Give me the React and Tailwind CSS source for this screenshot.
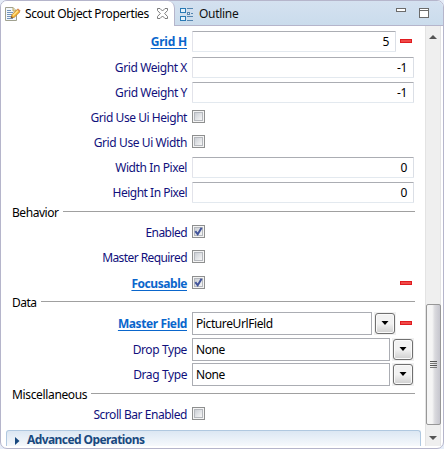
const FONT = "font-['Noto_Sans','Open_Sans',sans-serif]";

function Label({ text, link, spacing }) {
  return (
    <div className="flex w-[186px] shrink-0 justify-end whitespace-nowrap">
      <span
        className={`${spacing} ${
          link ? "font-bold text-[#0a66cc] underline decoration-1 underline-offset-2" : "text-[#10107c]"
        }`}
      >
        {text}
      </span>
    </div>
  );
}

function Row({ label, link, spacing = "tracking-[-0.4px]", height = "h-[25px]", children }) {
  return (
    <div className={`flex items-center ${height}`}>
      <Label text={label} link={link} spacing={spacing} />
      <div className="ml-[5px] flex items-center">{children}</div>
    </div>
  );
}

function NumberField({ value, width = "w-[222px]" }) {
  return (
    <div
      className={`${width} flex h-[21px] items-center justify-end rounded-[1px] border border-t-[#abadb3] border-r-[#dbdfe6] border-b-[#e3e9ef] border-l-[#e2e3ea] bg-white pr-[6px] text-black tracking-[-0.4px]`}
    >
      {value}
    </div>
  );
}

function Checkbox({ checked }) {
  return (
    <div className="mb-[2px] h-[13px] w-[13px] border border-[#8e8f8f] bg-[#f4f4f4] p-px">
      <div className="h-[9px] w-[9px] border border-[#b5b8bd] bg-linear-to-br from-[#cbcfd5] to-[#f6f6f6]">
        {checked && (
          <svg className="-mt-px -ml-px block" width="9" height="9" viewBox="0 0 9 9" fill="none">
            <path d="M1.3 4.2 L3.7 7.2 L7.6 .8" stroke="#42549a" strokeWidth="2" />
          </svg>
        )}
      </div>
    </div>
  );
}

function Minus({ gap = "ml-1" }) {
  return <div className={`${gap} mb-px h-1 w-3 border border-[#e01c20] bg-[#f04a48]`} />;
}

function Combo({ value, width = "w-[198px]", spacing = "tracking-[-0.4px]" }) {
  return (
    <>
      <div className={`${width} ${spacing} flex h-[23px] items-center border border-[#abadb3] bg-white pl-[3px] text-black`}>
        {value}
      </div>
      <div className="ml-[2px] flex h-[23px] w-[22px] items-center justify-center bg-[#f0f0f0]">
        <div className="flex h-[21px] w-5 items-center justify-center rounded-[3px] border border-[#707070] bg-linear-to-b from-[#f2f2f2] from-50% to-[#cfcfcf] pb-px shadow-[inset_0_0_0_1px_#fafafa]">
          <svg width="8" height="4" viewBox="0 0 8 4">
            <path d="M0.5 0H7.5L4 4Z" fill="#000" />
          </svg>
        </div>
      </div>
    </>
  );
}

function Section({ title, spacing, className = "" }) {
  return (
    <div className={`flex h-[15px] items-center pl-[11px] ${className}`}>
      <span className={`whitespace-nowrap text-black ${spacing}`}>{title}</span>
      <div className="mb-[2px] ml-[4px] h-px flex-1 bg-[#a0a0a0]" />
    </div>
  );
}

function TabBar() {
  return (
    <div className="flex h-[25px] shrink-0 bg-linear-to-b from-[#d4e1f0] to-[#cadcec]">
      <div className="flex h-[25px] w-[174px] shrink-0 items-center rounded-tr-[7px] border-r border-[#b5b5cb] bg-white pl-1">
        <svg width="16" height="16" viewBox="0 0 16 16" className="shrink-0">
          <path d="M.5 1.5H8L11.5 5V14.5H.5Z" fill="#f2f7fc" stroke="#a0a18f" />
          <path d="M8 1.5V5H11.5" fill="#e5dbad" stroke="#b6a96d" />
          <path d="M2 4.5H6M2 6.5H8M2 8.5H7M2 10.5H6M2 12.5H8" stroke="#7294ba" />
          <path d="M6 12L7 8.7L12.4 3.2L15 5.7L9.4 11.2Z" fill="#f4b735" stroke="#bd7925" strokeWidth=".8" />
          <path d="M8 9.5L13 4.5" stroke="#ffe38c" strokeWidth="1.2" />
          <path d="M12 3.5L13.1 2.4L15.6 4.8L14.5 6Z" fill="#d98a57" />
          <path d="M6 12L6.6 10L8 11.4Z" fill="#5a4630" />
        </svg>
        <span className="ml-[4px] w-[126px] whitespace-nowrap tracking-[-0.38px] text-black">
          Scout Object Properties
        </span>
        <svg width="11" height="11" viewBox="0 0 11 11" className="ml-[6px] shrink-0">
          <path
            d="M.5 .5H3L5.5 3L8 .5H10.5V2.5L7.7 5.5L10.5 8.5V10.5H8L5.5 8L3 10.5H.5V8.5L3.3 5.5L.5 2.5Z"
            fill="#fff"
            stroke="#6e6e6e"
            strokeWidth=".9"
          />
        </svg>
      </div>
      <div className="flex flex-1 items-center border-b border-[#b5b5cb] pl-[5px]">
        <svg width="14" height="16" viewBox="0 0 14 16" shapeRendering="crispEdges" className="mt-px shrink-0">
          <path d="M1 2H5V6H1ZM1 11H5V15H1Z" fill="#e4f1fa" />
          <path d="M.5 2.5H5.5V6.5H.5ZM.5 10.5H5.5V14.5H.5Z" fill="#e4f1fa" stroke="#2779b5" />
          <path d="M7 2.5H13M11 7.5H13M7 10.5H13M7 14.5H13" stroke="#5686b0" />
          <path d="M7.5 6.5H9.5V8.5H7.5Z" fill="#e4f1fa" stroke="#5686b0" />
        </svg>
        <span className="ml-[5px] tracking-[-0.3px] text-[#111]">Outline</span>
        <div className="mt-[7px] ml-auto h-1 w-[10px] self-start border border-[#6b6b6b] bg-white" />
        <div className="mt-[7px] mr-[14px] ml-[13px] h-[10px] w-[10px] self-start border border-[#6b6b6b] bg-white pt-px">
          <div className="h-px bg-[#6b6b6b]" />
        </div>
      </div>
    </div>
  );
}

function ScrollBar() {
  return (
    <div className="flex h-[420px] w-4 shrink-0 flex-col items-center border-x border-[#e3e3e3] bg-[#efefef]">
      <svg width="8" height="4" viewBox="0 0 8 4" className="mt-[9px] shrink-0">
        <path d="M0 4L4 0L8 4Z" fill="#555" />
      </svg>
      <div className="mt-[265px] flex h-[121px] w-[15px] shrink-0 flex-col items-center justify-center gap-px rounded-[2px] border border-[#979797] bg-linear-to-r from-[#f5f5f5] from-40% via-[#dadade] via-60% to-[#c6c6ce]">
        <div className="h-px w-[7px] bg-[#555]" />
        <div className="h-px w-[7px] bg-[#777]" />
        <div className="h-px w-[7px] bg-[#555]" />
        <div className="h-px w-[7px] bg-[#777]" />
      </div>
      <svg width="8" height="4" viewBox="0 0 8 4" className="mt-[11px] shrink-0">
        <path d="M0 0L4 4L8 0Z" fill="#555" />
      </svg>
    </div>
  );
}

export default function App() {
  return (
    <div className={`h-[449px] w-[444px] overflow-hidden bg-[#e6edf8] text-[12px] leading-[15px] ${FONT}`}>
      <div className="flex h-[449px] w-[444px] flex-col overflow-hidden rounded-[7px] border border-[#b5b5cb] bg-white">
        <TabBar />
        <div className="flex h-[420px] shrink-0 overflow-hidden">
          <div className="flex w-[424px] shrink-0 flex-col">
            <div className="flex w-[414px] flex-col pt-[3px]">
              <Row label="Grid H" link spacing="tracking-[-0.2px]" height="h-[26px] pb-px">
                <NumberField value="5" width="w-[204px]" />
                <Minus />
              </Row>
              <Row label="Grid Weight X"><NumberField value="-1" /></Row>
              <Row label="Grid Weight Y"><NumberField value="-1" /></Row>
              <Row label="Grid Use Ui Height" spacing="tracking-[-0.45px]"><Checkbox /></Row>
              <Row label="Grid Use Ui Width"><Checkbox /></Row>
              <Row label="Width In Pixel"><NumberField value="0" /></Row>
              <Row label="Height In Pixel" spacing="tracking-[-0.5px]"><NumberField value="0" /></Row>
              <Section title="Behavior" spacing="tracking-[-0.45px]" />
              <Row label="Enabled" spacing="tracking-[-0.55px]"><Checkbox checked /></Row>
              <Row label="Master Required" spacing="tracking-[-0.58px]"><Checkbox /></Row>
              <Row label="Focusable" link spacing="tracking-[-0.45px]" height="h-[26px] pt-px">
                <Checkbox checked />
                <Minus gap="ml-[195px]" />
              </Row>
              <Section title="Data" spacing="tracking-[-0.5px]" className="-mt-px" />
              <Row label="Master Field" link spacing="tracking-[-0.4px]" height="h-[27px]">
                <Combo value="PictureUrlField" width="w-[180px]" />
                <Minus />
              </Row>
              <Row label="Drop Type"><Combo value="None" /></Row>
              <Row label="Drag Type"><Combo value="None" /></Row>
              <Section title="Miscellaneous" spacing="tracking-[-0.35px]" />
              <Row label="Scroll Bar Enabled" spacing="tracking-[-0.45px]"><Checkbox /></Row>
            </div>
            <div className="mt-[3px] ml-[5px] flex h-4 w-[415px] shrink-0 items-start rounded-t-[3px] border border-b-0 border-[#b0c8e0] bg-linear-to-b from-[#dce7f3] to-[#f6f9fc] pl-2">
              <svg width="5" height="8" viewBox="0 0 5 8" className="mt-[6px] shrink-0">
                <path d="M0 0L4.5 4L0 8Z" fill="#19497f" />
              </svg>
              <span className="mt-[3px] ml-[7px] whitespace-nowrap font-bold leading-[12px] tracking-[-0.58px] text-[#19497f]">
                Advanced Operations
              </span>
            </div>
          </div>
          <ScrollBar />
        </div>
      </div>
    </div>
  );
}
